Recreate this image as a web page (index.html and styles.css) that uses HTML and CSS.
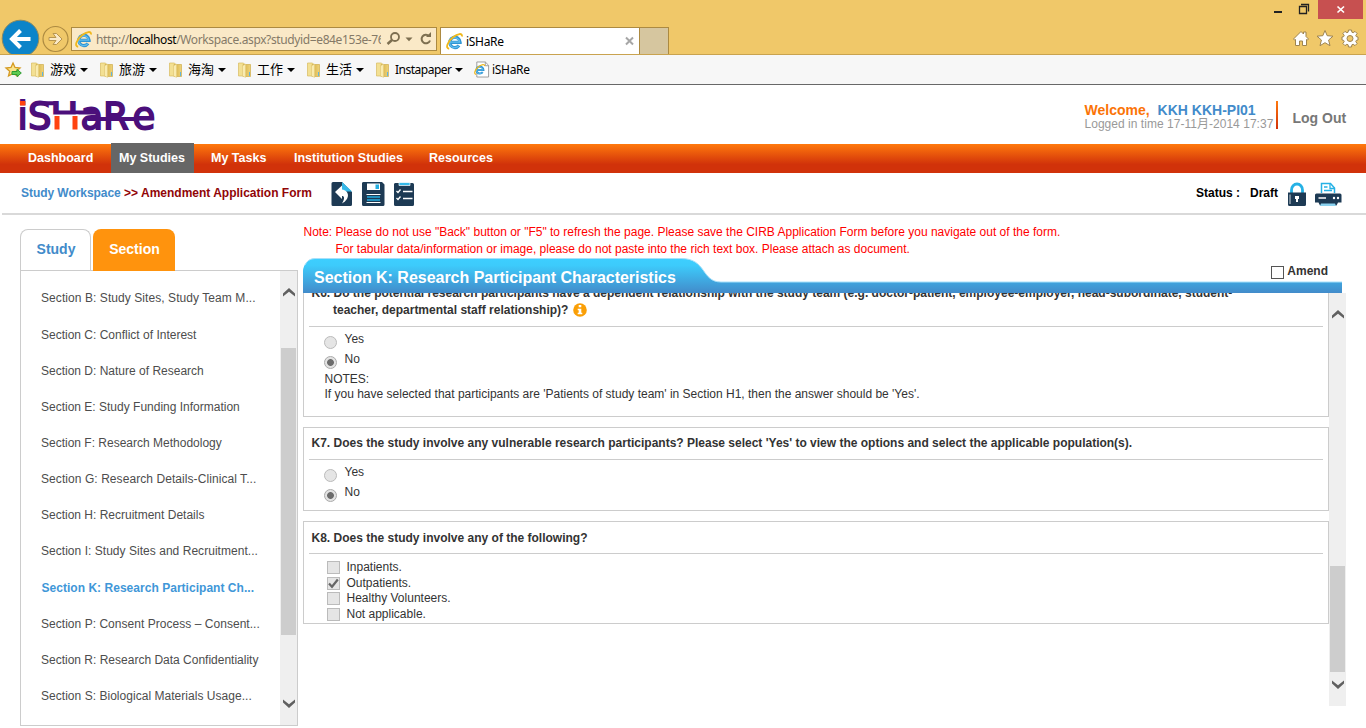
FILE: index.html
```html
<!DOCTYPE html>
<html lang="en">
<head>
<meta charset="utf-8">
<title>iSHaRe</title>
<link rel="stylesheet" href="styles.css">
</head>
<body>
<svg class="defs" width="0" height="0">
  <defs>
    <linearGradient id="fold" x1="0" x2="1" y1="0" y2="0"><stop offset="0" stop-color="#f3dc84"/><stop offset=".45" stop-color="#e0bf5c"/><stop offset="1" stop-color="#efd47c"/></linearGradient>
    <linearGradient id="head" x1="0" x2="0" y1="0" y2="1"><stop offset="0" stop-color="#3dcfff"/><stop offset=".2" stop-color="#3dcbfb"/><stop offset="1" stop-color="#428bca"/></linearGradient>
    <symbol id="ie" viewBox="0 0 16 16">
      <path d="M3.500 8.800H13.300A4.900 4.900 0 1 0 12.300 11.800" fill="none" stroke="#2f95d3" stroke-width="3"/>
      <path d="M4 8.600H12.800A4.700 4.700 0 1 0 12 11.800" fill="none" stroke="#62bdee" stroke-width="1.200"/>
      <path d="M3 14.800C-1 14.500 1.500 8 6.500 4 11 .4 15.600-.2 15 3.300" fill="none" stroke="#f0b81c" stroke-width="1.700"/>
    </symbol>
    <symbol id="folder" viewBox="0 0 14 16">
      <path d="M.5 1h5l1 1v12h-6z" fill="#f3e093" stroke="#d9bb60" stroke-width=".7"/>
      <path d="M5 2.500h7.500V14.500H5z" fill="url(#fold)" stroke="#cfae4c" stroke-width=".7"/>
      <path d="M4.500 4l3-2v13.500l-3-1.500z" fill="#f9ebb0" stroke="#dcc16c" stroke-width=".4"/><path d="M11.500 10v4" stroke="#62b5dc"/>
    </symbol>
    <symbol id="up" viewBox="0 0 12 9"><path d="M0 8.500V5.500L6 0l6 5.500v3L6 3.800z" fill="#606060"/></symbol>
  </defs>
</svg>

<header class="chrome">
  <div class="caption">
    <svg width="98" height="20" viewBox="1268 0 98 20">
      <path d="M1274 12h8" stroke="#222" stroke-width="2"/>
      <path d="M1299.500 6.500h7v7h-7zM1301 4.500h7.500v7" fill="none" stroke="#222" stroke-width="1.300"/>
      <path d="M1318 0h45v19h-45z" fill="#c75050"/><path d="M1337.500 6.500l6.500 6M1344 6.500l-6.500 6" stroke="#fff" stroke-width="1.700"/>
    </svg>
  </div>
  <div class="toolbar">
    <svg class="arrows" width="70" height="36" viewBox="0 0 70 36">
      <circle cx="20" cy="19.500" r="18.300" fill="#0c84c9" stroke="#8c8a62"/>
      <path d="M30 20H12M20 11.500L11.500 20l8.500 8.500" fill="none" stroke="#fff" stroke-width="4"/>
      <circle cx="55" cy="20" r="12.500" fill="none" stroke="#ac8a41" stroke-width="1.200"/>
      <path d="M48.500 18.500h7l-3-4h3.500l5.500 5.500-5.500 5.500h-3.500l3-4h-7z" fill="#fae9c7" stroke="#b7954f" stroke-width="1"/>
    </svg>
    <div class="address">
      <svg width="17" height="17"><use href="#ie"/></svg>
      <span class="url">http://<b>localhost</b>/Workspace.aspx?studyid=e84e153e-76</span>
      <svg width="50" height="20" viewBox="385 30 50 20">
        <circle cx="394" cy="38" r="4" fill="none" stroke="#7d6f50" stroke-width="1.800"/><path d="M391 41l-4.500 4" stroke="#7d6f50" stroke-width="2.500"/>
        <path d="M404.500 38.500h7l-3.500 3.700z" fill="#7d6f50"/>
        <path d="M428 37a4.300 4.300 0 1 0 1 4.500" fill="none" stroke="#7d6f50" stroke-width="2"/><path d="M425 38h5v-5z" fill="#7d6f50"/>
      </svg>
    </div>
    <div class="tab">
      <svg width="17" height="17"><use href="#ie"/></svg><span>iSHaRe</span>
      <svg width="9" height="8" viewBox="0 0 9 8"><path d="M1 .5l7 7M8 .5l-7 7" stroke="#a6a6a6" stroke-width="2"/></svg>
    </div>
    <div class="newtab"></div>
    <svg class="tools" width="70" height="20" viewBox="1291 29 70 20">
      <g fill="#fff" stroke="#9e8450" stroke-width="1">
        <path d="M1293.500 39l7.500-7.500 2.500 2.500v-2h2.500v4.500l2.500 2.500-1 1-1-.5v6h-4v-4.500h-3v4.500h-4v-6l-1 .5z"/>
        <path d="M1325 30.500l2.200 5.200 5.800.5-4.400 3.800 1.400 5.700-5-3-5 3 1.400-5.700-4.400-3.800 5.800-.5z"/>
        <path fill-rule="evenodd" transform="translate(0 -1)" d="M1348.500 31h3l.4 2.200 1.300.5 1.800-1.300 2.100 2.100-1.300 1.900.5 1.200 1.700.4v3l-1.700.4-.5 1.200 1.300 1.900-2.100 2.100-1.800-1.300-1.300.5-.4 2.200h-3l-.4-2.200-1.300-.5-1.800 1.300-2.100-2.100 1.300-1.900-.5-1.200-1.700-.4v-3l1.700-.4.500-1.200-1.300-1.900 2.100-2.100 1.800 1.300 1.300-.5zM1350 36.500a3 3 0 1 0 0 6 3 3 0 1 0 0-6z"/>
      </g>
    </svg>
  </div>
</header>
<div class="favs">
  <svg class="addfav" width="17" height="16" viewBox="0 0 17 16"><path d="M8 1l2 4.500 5 .5-3.700 3.200L12.500 14 8 11.500 3.500 14l1.200-4.800L1 6l5-.5z" fill="#fbe48b" stroke="#d49a22" stroke-width="1.300"/><path d="M7 9.500h5V7.300l4.300 3.700-4.300 3.700v-2.200H7z" fill="#60cc52" stroke="#2f9c34"/></svg>
  <div class="fav"><svg width="14" height="16"><use href="#folder"/></svg><span>游戏</span><i></i></div>
  <div class="fav"><svg width="14" height="16"><use href="#folder"/></svg><span>旅游</span><i></i></div>
  <div class="fav"><svg width="14" height="16"><use href="#folder"/></svg><span>海淘</span><i></i></div>
  <div class="fav"><svg width="14" height="16"><use href="#folder"/></svg><span>工作</span><i></i></div>
  <div class="fav"><svg width="14" height="16"><use href="#folder"/></svg><span>生活</span><i></i></div>
  <div class="fav insta"><svg width="14" height="16"><use href="#folder"/></svg><span>Instapaper</span><i></i></div>
  <div class="fav share"><svg width="16" height="17" viewBox="0 0 17 17"><path d="M3 .5h9l3.500 3.500v12.500H3z" fill="#fff" stroke="#999"/><path d="M12 .5v4h3.500" fill="none" stroke="#999"/><use href="#ie" x="0" y="2.500" width="12" height="12"/></svg><span>iSHaRe</span></div>
</div>

<div class="banner">
  <svg class="logo" width="140" height="34" viewBox="18 98 140 34" role="img" aria-label="iSHaRe">
    <text class="wordmark" x="17.500 28 50.500 80.500 103 132.500" y="128.500">iSHaRe</text>
    <path d="M44 103.200h14M58 112.500h39M88 119h50" fill="none" stroke="#4b0f7b" stroke-width="4"/>
    <path d="M52.500 114.500h26V131h-26z" fill="#fff"/>
    <path d="M20 101h5.500v4.500H20zM54.500 116h5v13.500h-5zM72.500 116h5v13.500h-5z" fill="#ff4310"/>
  </svg>
  <div class="account">
    <div class="welcome"><span>Welcome,</span><a>KKH KKH-PI01</a></div>
    <div class="logged">Logged in time 17-11月-2014 17:37</div>
  </div>
  <div class="divider"></div>
  <div class="logout">Log Out</div>
</div>
<nav class="nav">
  <a class="n1">Dashboard</a><a class="active">My Studies</a><a class="n3">My Tasks</a><a class="n4">Institution Studies</a><a class="n5">Resources</a>
</nav>
<div class="crumbs">
  <div class="trail"><a>Study Workspace</a> &gt;&gt; Amendment Application Form</div>
  <svg class="actions" width="84" height="26" viewBox="331 181 84 26">
    <g fill="#1d3a54">
      <path d="M333 182h9l10 10v12.500a1.500 1.500 0 0 1-1.500 1.500H333a1.500 1.500 0 0 1-1.500-1.500v-21a1.500 1.500 0 0 1 1.500-1.500z"/>
      <path d="M364 182h18l2.500 2.500v20a1.500 1.500 0 0 1-1.500 1.500h-19.500a1.500 1.500 0 0 1-1.500-1.500v-21a1.500 1.500 0 0 1 2-1.500z"/>
      <path d="M396 183h16.500a1.500 1.500 0 0 1 1.500 1.500v20a1.500 1.500 0 0 1-1.500 1.500h-17a1.500 1.500 0 0 1-1.500-1.500v-20a1.500 1.500 0 0 1 2-1.500z"/>
    </g>
    <path d="M342 182l10 9.500h-8q-2 0-2-2z" fill="#35b9e9"/>
    <path d="M335 192l7-6.500v4c7.500 1 8.500 9.500 0 14 3-5 2.500-7.500 0-7.500v3z" fill="#fff"/>
    <path d="M367 183.500h13v6.500h-13z" fill="#fff"/><path d="M375.500 184.500h3.500v4.500h-3.500z" fill="#23aee1"/>
    <path d="M366.500 194.500h14M366.500 202.500h14" stroke="#fff" stroke-width="1"/><path d="M367 197h13M367 200h13" stroke="#23aee1" stroke-width="1.600"/>
    <path d="M399 182.500h11v3h-11z" fill="#35b9e9" stroke="#fff" stroke-width=".7"/>
    <path d="M403 191.500h9.500M403 198.500h9.500M396.500 191l1.500 1.500 2.500-3M396.500 198l1.500 1.500 2.500-3" fill="none" stroke="#fff" stroke-width="1.300"/>
  </svg>
  <div class="status"><span>Status :</span><span>Draft</span></div>
  <svg class="lockprint" width="56" height="26" viewBox="1287 181 56 26">
    <path d="M1291.500 193v-3a5.500 6 0 0 1 11 0v3" fill="none" stroke="#25b1e5" stroke-width="2.800"/>
    <path d="M1288 192.500h18v12a1.500 1.500 0 0 1-1.500 1.500h-15a1.500 1.500 0 0 1-1.500-1.500z" fill="#1d3a54"/>
    <path d="M1290 194.500v9.500" stroke="#fff" stroke-width=".8"/><path d="M1295 196h4v3h-1v3h-2v-3h-1z" fill="#fff"/>
    <path d="M1321.500 193v-9.500h9l4 4.500v5" fill="#fff" stroke="#25b1e5" stroke-width="1.500"/><path d="M1330 184v4.500h4.500M1324 187h3.500M1324 190.500h8" fill="none" stroke="#25b1e5" stroke-width="1.300"/>
    <path d="M1315 195q0-1.500 1.500-1.500H1340q1.500 0 1.500 1.500v7.500h-3.500l-1.500 3h-16.500l-1.500-3H1315z" fill="#1d3a54"/><path d="M1321 203.500h14l1 2.500h-16z" fill="#8bd2ef"/><path d="M1318.500 198h7.500" stroke="#fff" stroke-width="1.500"/><circle cx="1334" cy="198" r="1.200" fill="#fff"/><circle cx="1338" cy="198" r="1.200" fill="#fff"/>
  </svg>
</div>

<main class="main">
  <aside class="side">
    <div class="tabs"><div class="t-study">Study</div><div class="t-section">Section</div></div>
    <div class="panel">
      <ul>
        <li class="first wide">Section B: Study Sites, Study Team M...</li>
        <li>Section C: Conflict of Interest</li>
        <li>Section D: Nature of Research</li>
        <li>Section E: Study Funding Information</li>
        <li>Section F: Research Methodology</li>
        <li class="wide">Section G: Research Details-Clinical T...</li>
        <li>Section H: Recruitment Details</li>
        <li class="mid">Section I: Study Sites and Recruitment...</li>
        <li class="current">Section K: Research Participant Ch...</li>
        <li class="mid">Section P: Consent Process – Consent...</li>
        <li>Section R: Research Data Confidentiality</li>
        <li class="mid">Section S: Biological Materials Usage...</li>
      </ul>
      <div class="bar sidebar"><svg class="a-up" width="12" height="9"><use href="#up"/></svg><div class="thumb"></div><svg class="a-down" width="12" height="9"><use href="#up"/></svg></div>
    </div>
  </aside>
  <section class="content">
    <div class="note"><span class="l1">Note: Please do not use "Back" button or "F5" to refresh the page. Please save the CIRB Application Form before you navigate out of the form.</span><span class="l2">For tabular data/information or image, please do not paste into the rich text box. Please attach as document.</span></div>
    <div class="heading">
      <svg class="headbg" width="1039" height="35" viewBox="0 0 1039 35"><path d="M0 35V13A12 13 0 0 1 12 .5H378C404 .5 398 24 418 24H1039V35z" fill="url(#head)"/><path d="M2 7Q5 .5 12 .5H378C404 .5 398 24 418 24H1039" fill="none" stroke="#a7e0fa"/></svg>
      <h1>Section K: Research Participant Characteristics</h1>
      <div class="amend"><i></i>Amend</div>
    </div>
    <div class="scroll">
      <div class="forms">
        <div class="card k6">
          <div class="q q6"><span class="q6a">K6. Do the potential research participants have a dependent relationship with the study team (e.g. doctor-patient, employee-employer, head-subordinate, student-</span><span class="q6b">teacher, departmental staff relationship)?<svg width="14" height="14" viewBox="0 0 14 14"><circle cx="7" cy="7" r="6.800" fill="#fa9f06"/><path d="M5.700 2h2.600v2.200H5.700zM4.700 5.700h3.600v4h1v1.600H4.700V9.700h1V7.300h-1z" fill="#fff"/></svg></span></div>
          <div class="opt"><i class="radio"></i>Yes</div>
          <div class="opt"><i class="radio on"></i>No</div>
          <div class="notes">NOTES:<br><span>If you have selected that participants are 'Patients of study team' in Section H1, then the answer should be 'Yes'.</span></div>
        </div>
        <div class="card k7">
          <div class="q"><span class="q7">K7. Does the study involve any vulnerable research participants? Please select 'Yes' to view the options and select the applicable population(s).</span></div>
          <div class="opt"><i class="radio"></i>Yes</div>
          <div class="opt"><i class="radio on"></i>No</div>
        </div>
        <div class="card k8">
          <div class="q"><span class="q8">K8. Does the study involve any of the following?</span></div>
          <div class="checks">
            <div class="chk"><i class="box"></i>Inpatients.</div>
            <div class="chk"><i class="box"><svg width="11" height="11" viewBox="0 0 11 11"><path d="M1 5.500l3 3.300L9.800 1.500" fill="none" stroke="#666" stroke-width="2.200"/></svg></i>Outpatients.</div>
            <div class="chk"><i class="box"></i>Healthy Volunteers.</div>
            <div class="chk"><i class="box"></i>Not applicable.</div>
          </div>
        </div>
      </div>
      <div class="bar mainbar"><svg class="a-up" width="12" height="9"><use href="#up"/></svg><div class="thumb"></div><svg class="a-down" width="12" height="9"><use href="#up"/></svg></div>
    </div>
  </section>
</main>
</body>
</html>
```
FILE: styles.css
```css
* { box-sizing: border-box; }
body { margin: 0; width: 1366px; height: 728px; overflow: hidden; background: #fff; font: 12px/15px "Liberation Sans", Arial, "Noto Sans CJK SC", sans-serif; color: #333; }
svg { display: block; flex: none; overflow: visible; }
.defs { position: absolute; }
span, a { white-space: nowrap; }

/* Browser chrome */
.chrome { height: 55px; background: #f0c869; border-bottom: 1px solid #c9a34f; font-family: "Noto Sans", sans-serif; color: #000; }
.caption { height: 19px; display: flex; justify-content: flex-end; }
.toolbar { height: 35px; display: flex; overflow: hidden; }
.arrows { width: 71px; }
.address { width: 366px; height: 24px; margin-top: 8px; border: 1px solid #ac8a41; background: #fae9c7; display: flex; align-items: center; padding-left: 3px; }
.url { width: 286px; overflow: hidden; margin: 0 5px 0 4px; color: #857a67; letter-spacing: -.38px; }
.url b { color: #000; font-weight: 400; }
.tab { margin: 8px 0 0 3px; width: 200px; border: 1px solid #ac8a41; border-bottom: 0; background: #fff; display: flex; align-items: center; padding: 0 5px; gap: 3px; }
.tab span { flex: 1; letter-spacing: -.3px; }
.newtab { width: 29px; margin-top: 8px; background: #d6c69f; border: 1px solid #ac8a41; border-width: 1px 1px 0 0; }
.tools { margin: 10px 5px 0 auto; }
.favs { height: 30px; background: #f7f7f7; border-bottom: 1px solid #686868; display: flex; align-items: center; font-family: "Noto Sans", "Noto Sans CJK SC", sans-serif; color: #000; padding-left: 5px; }
.addfav { margin-right: 9px; }
.fav { width: 69px; display: flex; align-items: center; gap: 5px; font-size: 13px; }
.fav span { min-width: 26px; }
.fav i { border: 4px solid transparent; border-top-color: #000; border-bottom: 0; margin-left: -1px; }
.insta { width: 98px; font-size: 12px; letter-spacing: -.5px; }
.insta i { margin-left: -2px; }
.share { gap: 2px; font-size: 12px; letter-spacing: -.3px; }

/* Application header */
.banner { height: 59px; display: flex; }
.logo { margin: 13px 0 0 18px; }
.wordmark { font: 37px "DejaVu Sans", sans-serif; fill: #4b0f7b; stroke: #4b0f7b; stroke-width: 1.800px; }
.account { margin: 17px 0 0 auto; width: 191.500px; }
.welcome { font-weight: 700; font-size: 14px; line-height: 16px; color: #fb7306; display: flex; gap: 8px; }
.welcome a, .trail a { color: #428bca; }
.logged { white-space: nowrap; color: #999; line-height: 13px; letter-spacing: .03px; }
.divider { width: 2px; height: 28px; margin-top: 16px; background: linear-gradient(#ff790d, #d1320a); }
.logout { width: 88px; padding: 25px 0 0 14.500px; font: 700 14px/16px "Liberation Sans", sans-serif; color: #777; white-space: nowrap; }
.nav { height: 29px; display: flex; background: linear-gradient(#ff790d, #d1320a 70%); color: #fff; font-weight: 700; font-size: 12.500px; line-height: 29px; }
.n1 { width: 111px; padding-left: 28px; }
.active { width: 83px; margin-top: -1px; background: #666; padding-left: 8px; line-height: 31px; }
.n3 { width: 100px; padding-left: 17px; }
.n4 { width: 135px; }
.crumbs { height: 42px; margin-left: 2px; border-bottom: 2px solid #d9d9d9; display: flex; padding: 8px 23px 0 19px; }
.trail { width: 310px; padding-top: 5px; font-weight: 700; color: #910507; white-space: nowrap; }
.trail a { letter-spacing: -.05px; }
.status { margin: 5px 9px 0 auto; font-weight: 700; color: #000; display: flex; gap: 10px; }

/* Section list */
.main { display: flex; }
.side { width: 278px; margin: 14px 5px 0 20px; }
.tabs { display: flex; gap: 2px; font: 700 14px/39px "Liberation Sans", sans-serif; text-align: center; color: #428bca; }
.t-study { width: 71px; height: 41px; border: 1px solid #ccc; border-bottom: 0; border-radius: 8px 8px 0 0; padding-left: 1px; }
.t-section { width: 82px; height: 42px; margin-bottom: -1px; z-index: 1; background: #ff930d; border-radius: 8px 8px 0 0; color: #fff; padding-left: 1px; line-height: 41px; }
.panel { height: 456px; border: 1px solid #ccc; display: flex; justify-content: space-between; }
ul { list-style: none; margin: 9px 0 0; padding: 0 0 0 20px; color: #4d4d4d; }
li { height: 36px; line-height: 37px; white-space: nowrap; }
.wide { letter-spacing: .07px; }
.mid { letter-spacing: .035px; }
.first { height: 37px; }
.current { height: 37px; line-height: 39px; color: #3f97d8; font-weight: 700; padding-left: .500px; letter-spacing: .03px; }
.bar { width: 17px; background: #efefef; display: flex; flex-direction: column; align-items: center; }
.thumb { width: 15px; background: #cdcdcd; }
.a-down { transform: rotate(180deg); margin-top: auto; }
.sidebar .a-up { margin-top: 17px; }
.sidebar .thumb { height: 287px; margin-top: 51px; }
.sidebar .a-down { margin-bottom: 17px; }

/* Form */
.content { width: 1043px; padding-top: 9px; }
.note { height: 35px; color: #f00; line-height: 17px; display: flex; flex-direction: column; align-items: flex-start; padding-left: .5px; }
.l2 { margin-left: 32px; }
.heading { position: relative; height: 34px; display: flex; justify-content: space-between; }
.headbg { position: absolute; left: 0; top: -1px; z-index: 1; }
h1 { position: relative; z-index: 2; margin: 0; padding: 10px 0 0 11px; font-size: 16px; line-height: 18px; color: #fff; white-space: nowrap; letter-spacing: -.02px; }
.amend { font-weight: 700; padding: 5px 18px 0 0; display: flex; gap: 3px; }
.amend i { width: 13px; height: 13px; border: 1px solid #555; background: #fff; margin-top: 2px; }
.scroll { height: 413px; display: flex; overflow: hidden; }
.forms { width: 1026px; }
.mainbar .a-up { margin-top: 17px; }
.mainbar .thumb { height: 106px; margin-top: 247px; }
.mainbar .a-down { margin-bottom: 17px; }
.card { border: 1px solid #ccc; padding: 0 5px; margin-bottom: 10px; }
.k6 { height: 124px; border-top: 0; }
.k7 { height: 84px; }
.k8 { height: 103px; }
.q { height: 32px; padding: 8px 0 0 2.500px; font-weight: 700; border-bottom: 1px solid #ccc; }
.k8 .q { padding-top: 9px; }
.q6 { height: 34px; padding-top: 0; display: flex; flex-direction: column; align-items: flex-start; }
.q6 .q6a { margin-top: -8px; line-height: 17px; }
.q6b { display: flex; gap: 5px; padding-left: 21.500px; line-height: 17px; }
.q6b svg { margin-top: 1px; }
.opt { height: 20px; display: flex; gap: 7.500px; padding: 5px 0 0 15px; }
.radio { width: 13px; height: 13px; border: 1px solid #bbb; border-radius: 50%; background: #e5e5e5; margin-top: 4px; flex: none; }
.on { border-color: #aaa; background: radial-gradient(circle, #6c6c6c 0 3px, #e3e3e3 3.800px); }
.notes { padding: 5px 0 0 15.500px; }
.checks { padding: 6px 0 0 18px; }
.chk { height: 15.600px; display: flex; gap: 6.500px; }
.box { width: 13px; height: 13px; border: 1px solid #bbb; background: #e5e5e5; margin-top: 1px; flex: none; }
```
